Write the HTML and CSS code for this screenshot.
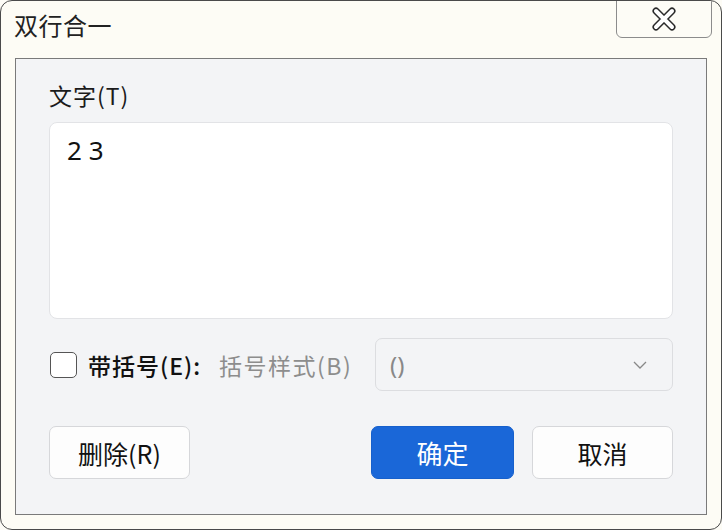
FILE: index.html
```html
<!DOCTYPE html>
<html lang="zh-CN">
<head>
<meta charset="utf-8">
<title>双行合一</title>
<link rel="stylesheet" href="styles.css">
</head>
<body>
<div class="window">
  <div class="titlebar">
    <div class="title">双行合一</div>
    <div class="close">
      <svg width="26" height="24" viewBox="0 0 26 24">
        <path d="M5 4 L21 20 M21 4 L5 20" fill="none" stroke="#2a2a2a" stroke-width="7" stroke-linecap="round"/>
        <path d="M5 4 L21 20 M21 4 L5 20" fill="none" stroke="#ffffff" stroke-width="4" stroke-linecap="round"/>
      </svg>
    </div>
  </div>
  <div class="panel">
    <div class="label">文字(T)</div>
    <div class="textarea">2 3</div>
    <div class="row">
      <div class="checkbox"></div>
      <div class="cb-label">带括号(E):</div>
      <div class="style-label">括号样式(B)</div>
      <div class="select">
        <span class="select-value">()</span>
        <svg class="chev" width="16" height="10" viewBox="0 0 16 10">
          <path d="M2 2 L8 8 L14 2" fill="none" stroke="#888" stroke-width="1.3"/>
        </svg>
      </div>
    </div>
    <div class="buttons">
      <div class="btn">删除(R)</div>
      <div class="spacer"></div>
      <div class="btn primary">确定</div>
      <div class="btn">取消</div>
    </div>
  </div>
</div>
</body>
</html>
```

FILE: styles.css
```css
* { box-sizing: border-box; }
html, body { margin: 0; padding: 0; background: #fdfcf6; }
body { font-family: "Noto Sans CJK SC", "Noto Sans", sans-serif; color: #1b1b1b; }
.window {
  width: 722px; height: 530px;
  border: 1px solid #4a4a4a;
  border-radius: 12px;
  background: #fdfcf5;
  display: flex; flex-direction: column;
  overflow: hidden;
}
.titlebar {
  height: 57px;
  display: flex; align-items: flex-start;
  padding-left: 13px;
}
.title { font-size: 24px; line-height: 26px; margin-top: 11px; flex: 1; color: #222; letter-spacing: 0.5px; }
.close {
  width: 96px; height: 38px;
  margin-top: -1px; margin-right: 9px;
  border: 1px solid #8c8c8c;
  border-radius: 0 0 6px 6px;
  background: #fdfcf6;
  display: flex; align-items: center; justify-content: center;
}
.panel {
  flex: 1;
  margin: 0 14px 14px 14px;
  border: 1px solid #7a7a7a;
  background: #f3f4f6;
  padding: 0 33px;
  display: flex; flex-direction: column;
}
.label { font-size: 23px; line-height: 28px; margin-top: 22px; color: #1b1b1b; letter-spacing: 1px; }
.textarea {
  margin-top: 13px;
  height: 197px;
  background: #fff;
  border: 1px solid #e2e3e6;
  border-radius: 8px;
  padding: 11px 17px;
  font-size: 26px; line-height: 32px;
  font-family: "Noto Sans", sans-serif;
  color: #111;
}
.row {
  margin-top: 19px;
  height: 53px;
  display: flex; align-items: center;
}
.checkbox {
  width: 27px; height: 26px;
  margin-left: 1px;
  border: 1.5px solid #555;
  border-radius: 5px;
  background: #fff;
}
.cb-label { font-size: 23px; margin-left: 11px; font-weight: 500; color: #111; letter-spacing: 1px; }
.style-label { font-size: 23px; margin-left: 18px; color: #8d8d8d; letter-spacing: 1.5px; }
.select {
  margin-left: auto;
  width: 298px; height: 53px;
  border: 1px solid #dcdde0;
  border-radius: 7px;
  background: #f3f4f6;
  display: flex; align-items: center;
  padding: 0 24px 0 14px;
}
.select-value { font-size: 24px; color: #888; flex: 1; font-family: "Noto Sans", sans-serif; }
.buttons {
  margin-top: 35px;
  display: flex; align-items: center; gap: 18px;
}
.spacer { flex: 1; }
.btn {
  width: 141px; height: 53px;
  border: 1px solid #d6d7da;
  border-radius: 7px;
  background: #fdfdfd;
  display: flex; align-items: center; justify-content: center;
  font-size: 25px; color: #111;
}
.btn.primary {
  width: 143px;
  background: #1a67d8;
  border-color: #1660cc;
  color: #fff;
  font-size: 26px;
}
```
